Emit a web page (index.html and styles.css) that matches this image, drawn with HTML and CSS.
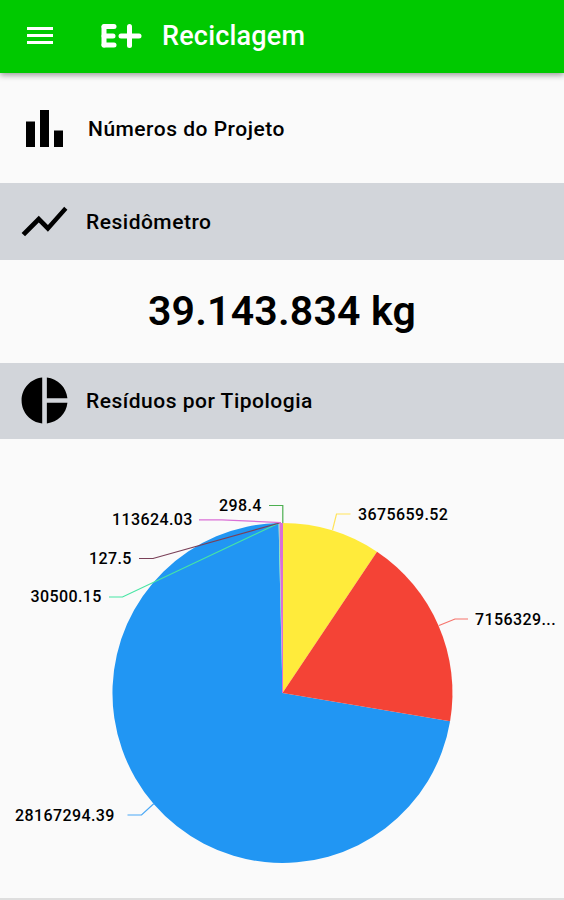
FILE: index.html
```html
<!DOCTYPE html>
<html lang="pt-BR">
<head>
    <meta charset="UTF-8">
    <meta name="viewport" content="width=device-width, initial-scale=1.0">
    <title>Reciclagem</title>
    <link rel="stylesheet" href="styles.css">
</head>
<body>
    <header class="toolbar">
        <svg class="menu-icon" viewBox="0 0 26 17">
            <path d="M0 0h26v3H0zM0 7h26v3H0zM0 14h26v3H0z"/>
        </svg>
        <svg class="logo" viewBox="0 0 42 26">
            <line x1="4" y1="4" x2="4" y2="22"/>
            <line x1="4" y1="3.5" x2="14" y2="3.5"/>
            <line x1="4" y1="13" x2="13" y2="13"/>
            <line x1="4" y1="22" x2="14" y2="22"/>
            <line x1="21" y1="13" x2="39" y2="13"/>
            <line x1="29.5" y1="3.5" x2="29.5" y2="22.5"/>
        </svg>
        <h1>Reciclagem</h1>
    </header>
    <main>
        <div class="project">
            <svg class="bars-icon" viewBox="0 0 37 37">
                <path d="M0 11.5h9V37H0zM14 0h9v37h-9zM28 20.5h9V37h-9z"/>
            </svg>
            <h2>Números do Projeto</h2>
        </div>
        <div class="section-bar">
            <svg class="section-icon" viewBox="0 0 24 24">
                <path d="M3.5 18.49l6-6.01 4 4L22 6.92l-1.41-1.41-7.09 7.97-4-4L2 16.99z"/>
            </svg>
            <h2>Residômetro</h2>
        </div>
        <div class="total">39.143.834 kg</div>
        <div class="section-bar">
            <svg class="section-icon" viewBox="0 0 24 24">
                <path d="M11 2v20c-5.07-.5-9-4.79-9-10s3.93-9.5 9-10zm2.03 0v8.99H22c-.47-4.74-4.24-8.52-8.97-8.99zm0 11.01V22c4.74-.47 8.5-4.25 8.97-8.99h-8.97z"/>
            </svg>
            <h2>Resíduos por Tipologia</h2>
        </div>
        <svg class="chart" viewBox="0 439 564 459">
            <path d="M282.5 693L450.1 721.2A170 170 0 1 1 278.6 523z" fill="#2196f3"/>
            <path d="M282.5 693V523A170 170 0 0 1 377 551.7z" fill="#ffeb3b"/>
            <path d="M282.5 693L377 551.7A170 170 0 0 1 450.1 721.2z" fill="#f44336"/>
            <path d="M282.5 693L278.6 523H279.4z" fill="#69f0ae"/>
            <path d="M282.5 693L279.4 523H282.8z" fill="#da70d6"/>
            <path d="M282.5 693V523" stroke="#da70d6"/>

            <!-- label connectors -->
            <g class="connectors">
                <path d="M109 597H122.500L279 523" stroke="#47e5a4"/>
                <path d="M139 558.500H153L279.500 523" stroke="#7a4058"/>
                <path d="M199 519.800H222L281 522.700" stroke="#da70d6"/>
                <path d="M269 505.500H282.800V523" stroke="#4caf50"/>
                <path d="M350.500 514H336.500L332.500 530" stroke="#ffe45c"/>
                <path d="M468 619H455L439 625.500" stroke="#f6736b"/>
                <path d="M127.500 815H141.500L154 803.500" stroke="#4ba8f5"/>
            </g>

            <g class="labels">
                <text x="219" y="511">298.4</text>
                <text x="112" y="525">113624.03</text>
                <text x="89" y="564">127.5</text>
                <text x="30.500" y="602">30500.15</text>
                <text x="358" y="519.500">3675659.52</text>
                <text x="475" y="624.500">7156329...</text>
                <text x="15" y="820.500">28167294.39</text>
            </g>
        </svg>
    </main>
</body>
</html>
```

FILE: styles.css
```css
body {
    margin: 0;
    height: 900px;
    overflow: hidden;
    background-color: #fafafa;
    color: #000;
    font-family: Roboto, sans-serif;
}
h1, h2 {
    margin: 0;
    font-weight: 500;
}
.toolbar {
    display: flex;
    align-items: center;
    height: 73px;
    padding: 0 0 2px 27px;
    box-sizing: border-box;
    background-color: #00c900;
    color: #fff;
    position: relative;
    box-shadow: 0 2px 6px rgba(0, 0, 0, 0.4);
}
.toolbar h1 {
    margin-left: 20px;
    font-size: 27px;
    letter-spacing: 0.2px;
}
.menu-icon {
    width: 26px;
    height: 17px;
    fill: #fff;
}
.logo {
    width: 42px;
    height: 26px;
    margin-left: 47px;
    stroke: #fff;
    stroke-width: 5;
    stroke-linecap: round;
}
.project {
    display: flex;
    align-items: center;
    height: 110px;
    padding-left: 26px;
    box-sizing: border-box;
}
.project h2 {
    margin-left: 25px;
}
h2 {
    padding-top: 1px;
    font-size: 21px;
    letter-spacing: 0.5px;
}
.bars-icon {
    width: 37px;
    height: 37px;
}
.section-bar {
    display: flex;
    align-items: center;
    height: 76.5px;
    padding-left: 17px;
    background-color: #d2d5da;
}
.section-icon {
    width: 55px;
    height: 55px;
    margin-right: 14px;
}
.total {
    height: 103px;
    line-height: 103px;
    text-align: center;
    font-size: 41px;
    font-weight: 600;
    letter-spacing: 0.2px;
}
.chart {
    display: block;
    width: 564px;
    height: 459px;
    border-bottom: 2px solid #dedede;
}
.connectors path {
    fill: none;
    stroke-width: 1.2;
}
.labels text {
    font-size: 16px;
    font-weight: 500;
    letter-spacing: 0.4px;
}
```
